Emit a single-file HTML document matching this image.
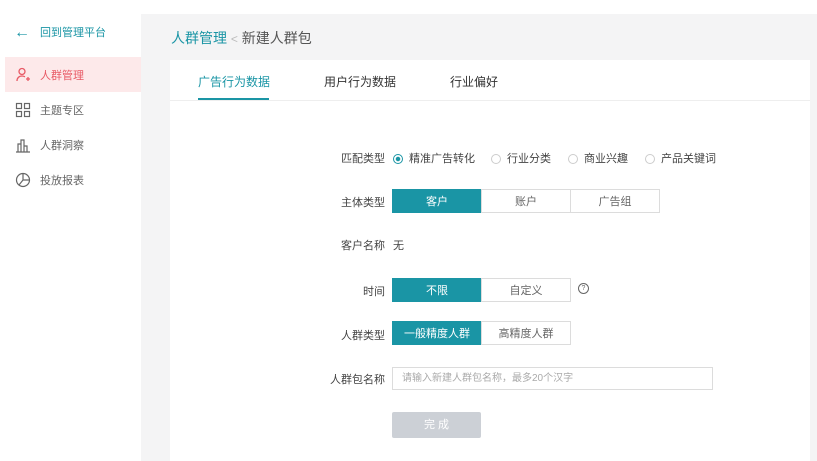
<html><head><style>
body{margin:0;width:817px;height:461px;overflow:hidden;background:#fff;font-family:"Liberation Sans","Noto Sans CJK SC",sans-serif;position:relative}
.a{position:absolute}
.side div.it{position:absolute;left:5px;width:136px;height:35px;font-size:11px;color:#666;display:flex;align-items:center}
.it span{position:absolute;left:35px}
.it svg{position:absolute;left:10px}
.lbl{position:absolute;right:432px;font-size:11px;color:#444;text-align:right;white-space:nowrap}
.seg{position:absolute;display:flex;left:392px;height:24px}
.seg div{width:90px;border:1px solid #dcdcdc;margin-left:-1px;font-size:11px;color:#666;display:flex;align-items:center;justify-content:center;box-sizing:border-box}
.seg div:first-child{margin-left:0}
.seg .on{background:#1a95a5;border-color:#1a95a5;color:#fff}
.r{display:inline-block;width:10px;height:10px;border:1px solid #ccc;border-radius:50%;vertical-align:-2px;margin-right:6px;box-sizing:border-box}
</style></head><body>
<div class="a" style="left:141px;top:14px;width:676px;height:447px;background:#f4f4f5"></div>
<div class="a" style="left:170px;top:60px;width:640px;height:401px;background:#fff"></div>
<div class="a" style="left:170px;top:100px;width:640px;height:1px;background:#eee"></div>
<div class="side">
<div class="a" style="left:14px;top:23px;font-size:11px;color:#1a95a5"><span style="font-size:16px;position:relative;top:1px">&#8592;</span><span style="margin-left:10px">回到管理平台</span></div>
<div class="it" style="top:57px;background:#fde9ea;color:#e85a66"><svg width="16" height="16" viewBox="0 0 16 16" fill="none" stroke="#e85a66" stroke-width="1.3"><circle cx="7" cy="4.5" r="3"/><path d="M2 14c0-3 2-5 5-5 1 0 2 .3 3 .8M11 12h4M13 10v4"/></svg><span>人群管理</span></div>
<div class="it" style="top:92px"><svg width="16" height="16" viewBox="0 0 16 16" fill="none" stroke="#666" stroke-width="1.2"><rect x="1.5" y="1.5" width="5" height="5"/><rect x="9.5" y="1.5" width="5" height="5"/><rect x="1.5" y="9.5" width="5" height="5"/><rect x="9.5" y="9.5" width="5" height="5"/></svg><span>主题专区</span></div>
<div class="it" style="top:127px"><svg width="16" height="16" viewBox="0 0 16 16" fill="none" stroke="#666" stroke-width="1.2"><path d="M1 15h14M3 15V7h3v8M6 15V3h3v12M9 15V9h3v6"/></svg><span>人群洞察</span></div>
<div class="it" style="top:162px"><svg width="16" height="16" viewBox="0 0 16 16" fill="none" stroke="#666" stroke-width="1.2"><circle cx="8" cy="8" r="6.5"/><path d="M8 1.5V8h6.5M8 8l-4 5"/></svg><span>投放报表</span></div>
</div>
<div class="a" style="left:171px;top:28px;font-size:14px;color:#1a95a5">人群管理 <span style="color:#bbb;font-size:12px">&lt;</span> <span style="color:#555">新建人群包</span></div>
<div class="a" style="left:198px;top:73px;font-size:12px;color:#1a95a5">广告行为数据</div>
<div class="a" style="left:198px;top:98px;width:71px;height:2px;background:#1a95a5"></div>
<div class="a" style="left:324px;top:73px;font-size:12px;color:#333">用户行为数据</div>
<div class="a" style="left:450px;top:73px;font-size:12px;color:#333">行业偏好</div>
<div class="lbl" style="top:150px">匹配类型</div>
<div class="a" style="left:393px;top:150px;font-size:11px;color:#444;white-space:nowrap">
<span class="r" style="border-color:#1a95a5;background:radial-gradient(#1a95a5 0 2px,transparent 2.5px)"></span>精准广告转化</div>
<div class="a" style="left:491px;top:150px;font-size:11px;color:#444;white-space:nowrap"><span class="r"></span>行业分类</div>
<div class="a" style="left:568px;top:150px;font-size:11px;color:#444;white-space:nowrap"><span class="r"></span>商业兴趣</div>
<div class="a" style="left:645px;top:150px;font-size:11px;color:#444;white-space:nowrap"><span class="r"></span>产品关键词</div>
<div class="lbl" style="top:194px">主体类型</div>
<div class="seg" style="top:189px"><div class="on">客户</div><div>账户</div><div>广告组</div></div>
<div class="lbl" style="top:237px">客户名称</div>
<div class="a" style="left:393px;top:237px;font-size:11px;color:#444">无</div>
<div class="lbl" style="top:283px">时间</div>
<div class="seg" style="top:278px"><div class="on">不限</div><div>自定义</div></div>
<div class="a" style="left:578px;top:283px;width:9px;height:9px;border:1px solid #666;border-radius:50%;font-size:7px;line-height:9px;text-align:center;color:#666">?</div>
<div class="lbl" style="top:327px">人群类型</div>
<div class="seg" style="top:321px"><div class="on">一般精度人群</div><div>高精度人群</div></div>
<div class="lbl" style="top:371px">人群包名称</div>
<div class="a" style="left:392px;top:367px;width:321px;height:23px;border:1px solid #dcdcdc;box-sizing:border-box;font-size:10px;color:#aaa;padding-left:9px;line-height:21px">请输入新建人群包名称，最多20个汉字</div>
<div class="a" style="left:392px;top:412px;width:89px;height:26px;background:#ccd0d6;border-radius:2px;color:#fff;font-size:11px;text-align:center;line-height:26px">完 成</div>
</body></html>
